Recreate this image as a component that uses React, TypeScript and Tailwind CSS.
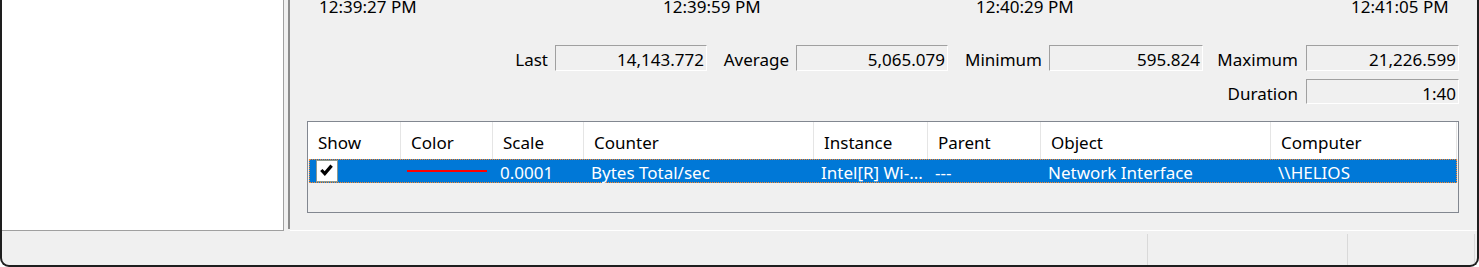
import React from "react";

const headers = [
  { label: "Show", w: "w-[93px]" },
  { label: "Color", w: "w-[92px]" },
  { label: "Scale", w: "w-[91px]" },
  { label: "Counter", w: "w-[230px]" },
  { label: "Instance", w: "w-[114px]" },
  { label: "Parent", w: "w-[113px]" },
  { label: "Object", w: "w-[230px]" },
  { label: "Computer", w: "w-[186px]" },
];

function ValueBox({ value, w, h = "h-[26px]" }: { value: string; w: string; h?: string }) {
  return (
    <div
      className={`${w} ${h} flex items-center justify-end pt-[4px] pr-[2px] border border-t-[#a0a0a0] border-l-[#a0a0a0] border-b-white border-r-white`}
    >
      {value}
    </div>
  );
}

function Stat({ label, lw, value, bw, gap }: { label: string; lw: string; value: string; bw: string; gap: string }) {
  return (
    <div className="flex items-center">
      <span className={`${lw} text-right pt-[4px]`}>{label}</span>
      <div className={gap}>
        <ValueBox value={value} w={bw} />
      </div>
    </div>
  );
}

export default function App() {
  return (
    <div className="w-[1479px] h-[267px] bg-[#f0f0f0] border-x-2 border-b-2 border-[#1e1e1e] rounded-b-[9px] overflow-hidden flex flex-col text-[17px] text-black font-['Noto_Sans',sans-serif]">
      <div className="flex h-[231px] shrink-0">
        {/* left tree pane */}
        <div className="w-[282px] h-full bg-white border-r border-b border-[#a0a0a0]" />
        <div className="w-[4px]" />
        {/* splitter */}
        <div className="w-[2px] h-[229px] bg-[#8c8c8c]" />

        {/* right pane */}
        <div className="flex-1 flex flex-col border-b border-white">
          <div className="flex h-[14px] leading-[14px] pl-[29px] whitespace-nowrap">
            <span className="w-[344px]">12:39:27 PM</span>
            <span className="w-[313px]">12:39:59 PM</span>
            <span className="w-[375px]">12:40:29 PM</span>
            <span>12:41:05 PM</span>
          </div>

          <div className="mt-[31px] h-[26px] flex justify-end pr-[18px]">
            <Stat label="Last" lw="w-[60px]" value="14,143.772" bw="w-[152px]" gap="ml-[7px]" />
            <Stat label="Average" lw="w-[82px]" value="5,065.079" bw="w-[152px]" gap="ml-[7px]" />
            <Stat label="Minimum" lw="w-[94px]" value="595.824" bw="w-[154px]" gap="ml-[7px]" />
            <Stat label="Maximum" lw="w-[95px]" value="21,226.599" bw="w-[153px]" gap="ml-[8px]" />
          </div>

          <div className="mt-[8px] h-[25px] flex justify-end items-center pr-[18px]">
            <span className="w-[95px] text-right pt-[4px]">Duration</span>
            <div className="ml-[8px]">
              <ValueBox value="1:40" w="w-[153px]" h="h-[25px]" />
            </div>
          </div>

          {/* counter list */}
          <div className="mt-[17px] ml-[17px] w-[1152px] h-[92px] border border-[#828790] flex flex-col">
            <div className="h-[37px] bg-white flex shrink-0">
              {headers.map((h) => (
                <div
                  key={h.label}
                  className={`${h.w} h-full border-r border-[#e5e5e5] pl-[10px] pt-[5px] flex items-center`}
                >
                  {h.label}
                </div>
              ))}
            </div>

            <div className="ml-[1px] w-[1148px] h-[24px] bg-[#0078d7] border border-dotted border-[#ff8728] flex text-white whitespace-nowrap">
              <div className="w-[91px] flex items-center">
                <div className="ml-[6px] w-[22px] h-[22px] bg-white border border-[#8f9a8f] flex items-start justify-start">
                  <svg className="ml-[3px] mt-[3px]" width="13" height="12" viewBox="0 0 13 12">
                    <path d="M1.3 6 L4.8 9.6 L11.6 1.6" fill="none" stroke="#000" strokeWidth="3.2" />
                  </svg>
                </div>
              </div>
              <div className="w-[92px] flex items-center">
                <div className="ml-[6px] w-[80px] h-[2px] bg-[#ff0000]" />
              </div>
              <div className="w-[91px] pl-[7px] pt-[4px] flex items-center">0.0001</div>
              <div className="w-[230px] pl-[7px] pt-[4px] flex items-center">Bytes Total/sec</div>
              <div className="w-[114px] pl-[7px] pt-[4px] flex items-center">Intel[R] Wi-...</div>
              <div className="w-[113px] pl-[7px] pt-[4px] flex items-center">---</div>
              <div className="w-[230px] pl-[7px] pt-[4px] flex items-center">Network Interface</div>
              <div className="flex-1 pl-[7px] pt-[4px] flex items-center">\\HELIOS</div>
            </div>
          </div>
        </div>
      </div>

      {/* status bar */}
      <div className="flex-1 flex pt-[3px]">
        <div className="flex-1" />
        <div className="w-[200px] border-l border-[#d9d9d9]" />
        <div className="w-[127px] border-l border-[#d9d9d9]" />
        <div className="w-[3px] border-l border-[#d9d9d9]" />
      </div>
    </div>
  );
}
